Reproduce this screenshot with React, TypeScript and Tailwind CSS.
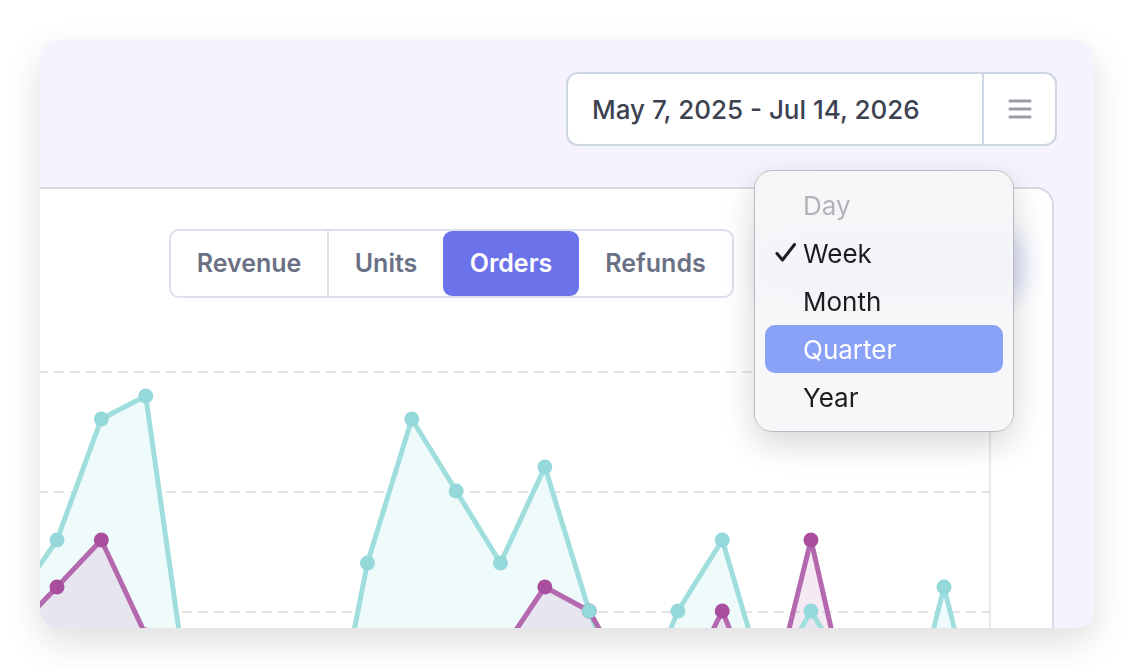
import React from 'react';

// Orders chart card with a date range picker and an open "group by" menu
// - Two series (teal / purple) drawn as straight-segment area charts
// - Points are given in card-space pixels and shifted into the svg's box

const STEP = 44.35;
const X0 = 57;

const teal = [605, 540, 419, 396, 709, 760, 780, 788, 563, 419, 491, 563, 467, 611, 720, 611, 540, 690, 611, 685, 765, 587, 765];
const purple = [633, 587, 540, 635, 700, 700, 700, 700, 700, 700, 700, 653, 587, 611, 690, 700, 611, 720, 540, 734, 700, 700, 700];

const BASE = 900;

function toPoints(ys: number[]) {
  return ys.map((y, i) => ({ x: X0 + STEP * (i - 1), y }));
}

function linePath(ys: number[]) {
  return toPoints(ys)
    .map((p, i) => `${i === 0 ? 'M' : 'L'}${p.x.toFixed(1)},${p.y}`)
    .join(' ');
}

function areaPath(ys: number[]) {
  const pts = toPoints(ys);
  const first = pts[0];
  const last = pts[pts.length - 1];
  return `${linePath(ys)} L${last.x.toFixed(1)},${BASE} L${first.x.toFixed(1)},${BASE} Z`;
}

function Chart() {
  const tealPts = toPoints(teal);
  const purplePts = toPoints(purple);
  return (
    <svg width="1030" height="400" className="block">
      <g transform="translate(-22,-300)">
        {[372, 492, 612].map((y) => (
          <line key={y} x1="22" x2="990" y1={y} y2={y} stroke="#e4e4e7" strokeWidth="2" strokeDasharray="10 6" />
        ))}
        <line x1="990" x2="990" y1="330" y2="900" stroke="#e3e3e6" strokeWidth="1.5" />

        <path d={areaPath(teal)} fill="#effafb" />
        <path d={areaPath(purple)} fill="rgba(176,80,165,0.12)" />

        <path d={linePath(teal)} fill="none" stroke="#a0dede" strokeWidth="5" strokeLinejoin="round" />
        <path d={linePath(purple)} fill="none" stroke="#b468ae" strokeWidth="5" strokeLinejoin="round" />

        {purplePts.map((p, i) => (
          <circle key={'p' + i} cx={p.x} cy={p.y} r="7.5" fill="#a94d9e" />
        ))}
        {tealPts.map((p, i) => (
          <circle key={'t' + i} cx={p.x} cy={p.y} r="7.5" fill="#95d8d9" />
        ))}
      </g>
    </svg>
  );
}

function Segmented() {
  const base = 'flex items-center justify-center text-[25px] font-semibold text-[#6b7185]';
  return (
    <div className="flex h-[69px] rounded-[10px] border-2 border-[#dde0ea] bg-white">
      <div className={`${base} w-[158px] border-r-2 border-[#dde0ea]`}>Revenue</div>
      <div className={`${base} w-[114px]`}>Units</div>
      <div className="flex w-[136px] items-center justify-center rounded-[9px] bg-[#6b72ea] text-[25px] font-semibold text-white">Orders</div>
      <div className={`${base} w-[153px]`}>Refunds</div>
    </div>
  );
}

function PeriodMenu() {
  const items = ['Day', 'Week', 'Month', 'Quarter', 'Year'];
  return (
    <div className="absolute left-[714px] top-[130px] w-[260px] rounded-[18px] border border-[#b9b9bf] bg-[#f6f6f8]/90 px-[10px] pt-[10px] pb-[10px] shadow-[0_12px_32px_rgba(0,0,0,0.16)] backdrop-blur-xl">
      {items.map((label) => {
        const active = label === 'Quarter';
        const disabled = label === 'Day';
        return (
          <div
            key={label}
            className={`relative flex h-[48px] items-center rounded-[10px] pl-[38px] text-[26px] ${
              active ? 'bg-[#89a2f7] text-white' : disabled ? 'text-[#b3b3b7]' : 'text-[#1d1d1f]'
            }`}
          >
            {label === 'Week' && (
              <svg width="22" height="22" viewBox="0 0 22 22" className="absolute left-[10px] top-[13px]">
                <path d="M2 11.5 L7.5 18 L19.5 2.5" fill="none" stroke="#1d1d1f" strokeWidth="3" strokeLinecap="round" strokeLinejoin="round" />
              </svg>
            )}
            {label}
          </div>
        );
      })}
    </div>
  );
}

export default function App() {
  return (
    <div className="h-[668px] w-full bg-white px-[40px] pt-[40px]" style={{ fontFamily: 'Inter, "Noto Sans", sans-serif' }}>
      <div className="relative flex h-[588px] flex-col overflow-hidden rounded-[18px] bg-[#f5f4fe] shadow-[0_14px_36px_rgba(0,0,0,0.13)]">
        <div className="flex justify-end pt-[32px] pr-[37px]">
          <div className="flex h-[74px] w-[491px] rounded-[12px] border-2 border-[#cfd6e3] bg-white">
            <div className="flex flex-1 items-center border-r-2 border-[#cfd6e3] pl-[24px] text-[26px] font-medium text-[#3d4251]">
              May 7, 2025 - Jul 14, 2026
            </div>
            <div className="flex w-[71px] items-center justify-center">
              <svg width="24" height="20" viewBox="0 0 24 20">
                <g stroke="#9a9da4" strokeWidth="3" strokeLinecap="round">
                  <line x1="2" x2="22" y1="2" y2="2" />
                  <line x1="2" x2="22" y1="10" y2="10" />
                  <line x1="2" x2="22" y1="18" y2="18" />
                </g>
              </svg>
            </div>
          </div>
        </div>

        <div className="relative mt-[41px] ml-[-20px] mr-[40px] h-[520px] shrink-0 rounded-tr-[18px] border-2 border-[#d5dae6] bg-white">
          <div className="flex pt-[40px] pl-[147px]">
            <Segmented />
          </div>
          <div className="mt-[2px]">
            <Chart />
          </div>
          {/* trigger for the period menu, seen through the menu's frosted panel */}
          <div className="absolute left-[742px] top-[44px] h-[64px] w-[258px] rounded-[12px] bg-[#cfd8f2] blur-md" />
        </div>

        <PeriodMenu />
      </div>
    </div>
  );
}
